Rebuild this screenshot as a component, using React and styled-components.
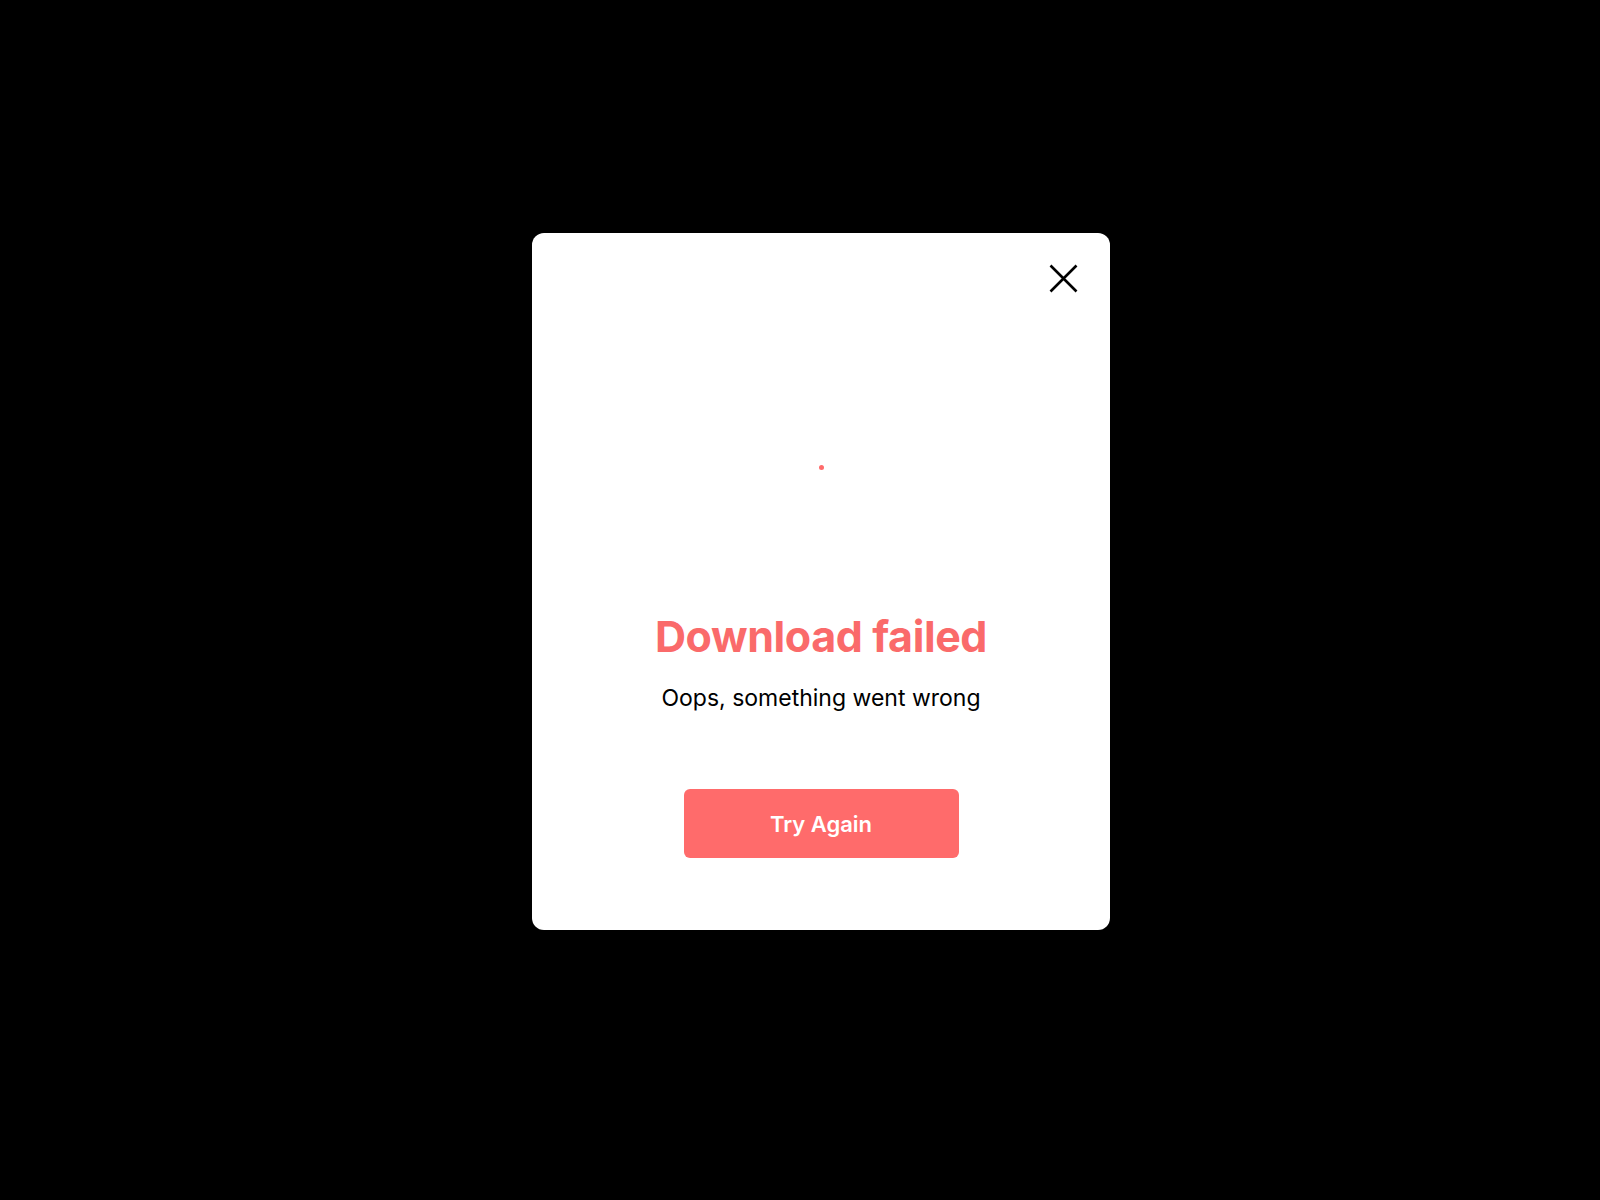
import React from 'react';
import styled, { createGlobalStyle } from 'styled-components';

const GlobalStyle = createGlobalStyle`
  html, body {
    margin: 0;
    padding: 0;
    background: #000000;
  }

  body {
    font-family: Inter, "Noto Sans", sans-serif;
  }
`;

const Page = styled.div`
  min-height: 1200px;
  box-sizing: border-box;
  padding: 233px 0 0 532px;
  background: #000000;
`;

const Modal = styled.div`
  width: 578px;
  height: 697px;
  box-sizing: border-box;
  background: #ffffff;
  border-radius: 12px;
  display: flex;
  flex-direction: column;
  align-items: center;
`;

const Header = styled.div`
  align-self: stretch;
  display: flex;
  justify-content: flex-end;
  padding: 31px 32px 0;
`;

const CloseButton = styled.button`
  width: 29px;
  height: 29px;
  padding: 0;
  border: none;
  background: transparent;
  cursor: pointer;
  display: flex;
`;

const Illustration = styled.div`
  height: 317px;
  box-sizing: border-box;
  padding-top: 172px;
  display: flex;
  align-items: flex-start;
  justify-content: center;
`;

const Dot = styled.span`
  width: 5px;
  height: 5px;
  border-radius: 50%;
  background: #ff6b6b;
`;

const Title = styled.h1`
  margin: 0;
  font-size: 43px;
  line-height: 52px;
  font-weight: 700;
  color: #fa6a6a;
  letter-spacing: -0.4px;
`;

const Subtitle = styled.p`
  margin: 21px 0 0;
  font-size: 23px;
  line-height: 30px;
  color: #000000;
`;

const RetryButton = styled.button`
  margin-top: 76px;
  width: 275px;
  height: 69px;
  border: none;
  border-radius: 6px;
  background: #ff6b6b;
  color: #ffffff;
  font-family: Inter, sans-serif;
  font-size: 22px;
  font-weight: 600;
  cursor: pointer;
`;

const CloseIcon = () => (
  <svg width="29" height="29" viewBox="0 0 29 29" fill="none">
    <path d="M1.5 1.5 L27.5 27.5 M27.5 1.5 L1.5 27.5" stroke="#000" strokeWidth="2.6" />
  </svg>
);

const App = () => (
  <>
    <GlobalStyle />
    <Page>
      <Modal>
        <Header>
          <CloseButton aria-label="Close">
            <CloseIcon />
          </CloseButton>
        </Header>
        <Illustration>
          <Dot />
        </Illustration>
        <Title>Download failed</Title>
        <Subtitle>Oops, something went wrong</Subtitle>
        <RetryButton>Try Again</RetryButton>
      </Modal>
    </Page>
  </>
);

export default App;
